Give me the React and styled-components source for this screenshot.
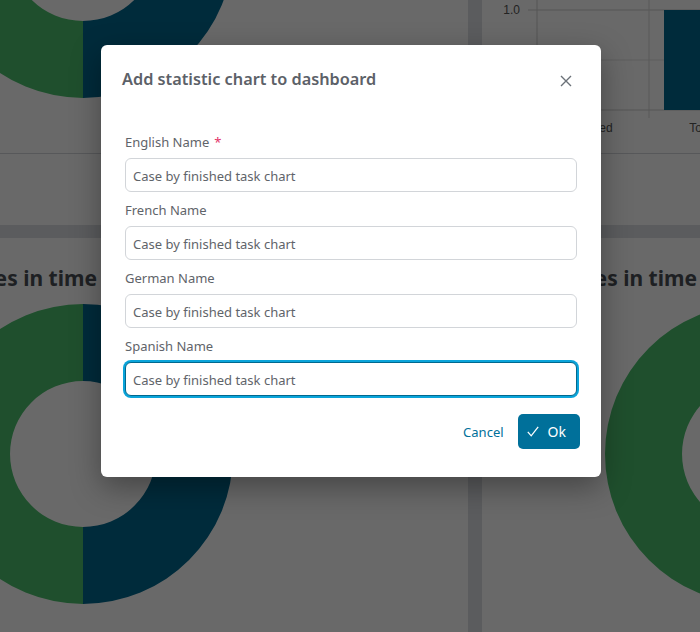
import React from "react";
import styled, { createGlobalStyle } from "styled-components";

const GlobalStyle = createGlobalStyle`
  html, body {
    margin: 0;
    padding: 0;
    height: 632px;
    overflow: hidden;
    background: #dee0e5;
    font-family: "Noto Sans", "Open Sans", sans-serif;
  }
`;

const Page = styled.div`
  position: relative;
  width: 700px;
  height: 632px;
  overflow: hidden;
`;

const Dashboard = styled.div`
  display: grid;
  grid-template-columns: 528px 560px;
  grid-template-rows: 225px 420px;
  column-gap: 14px;
  row-gap: 13px;
  margin-left: -60px;
`;

const Card = styled.div`
  background: #ffffff;
  display: flex;
  flex-direction: column;
  overflow: hidden;
`;

const ChartArea = styled.div`
  height: 153px;
  border-bottom: 1px solid #d4d6da;
  overflow: hidden;
`;

const CardTitle = styled.h2`
  margin: 0;
  padding: 26px 0 0 ${(p) => p.$indent}px;
  font-size: 21px;
  font-weight: 700;
  line-height: 28px;
  color: #4a4f55;
  white-space: nowrap;
`;

const Backdrop = styled.div`
  position: absolute;
  inset: 0;
  background: rgba(0, 0, 0, 0.59);
  display: flex;
  justify-content: center;
  align-items: flex-start;
  padding: 45px 0 0 2px;
`;

const Modal = styled.div`
  width: 500px;
  background: #ffffff;
  border-radius: 6px;
  box-shadow: 0 10px 30px rgba(0, 0, 0, 0.35);
  display: flex;
  flex-direction: column;
`;

const Header = styled.div`
  display: flex;
  align-items: center;
  justify-content: space-between;
  padding: 21px 28px 19px 21px;
`;

const Title = styled.h3`
  margin: 0;
  font-size: 16.3px;
  font-weight: 600;
  line-height: 26px;
  color: #5c6168;
`;

const CloseButton = styled.button`
  border: none;
  background: none;
  padding: 0;
  margin-top: 4px;
  width: 14px;
  height: 14px;
  display: flex;
  align-items: center;
  justify-content: center;
  cursor: pointer;
`;

const Content = styled.div`
  display: flex;
  flex-direction: column;
  gap: 9px;
  padding: 22px 24px 0 24px;
`;

const Field = styled.div`
  display: flex;
  flex-direction: column;
  gap: 7px;
`;

const Label = styled.label`
  font-size: 13px;
  line-height: 18px;
  color: #5f646a;
`;

const Required = styled.span`
  color: #e3326a;
  margin-left: 5px;
`;

const Input = styled.input`
  box-sizing: border-box;
  width: 100%;
  height: 34px;
  padding: 1px 7px 0 7px;
  border-radius: 6px;
  border: 1px solid ${(p) => (p.$focused ? "#00698f" : "#d2d5d9")};
  box-shadow: ${(p) => (p.$focused ? "0 0 0 2px #0aa4da" : "none")};
  font-family: "Noto Sans", "Open Sans", sans-serif;
  font-size: 13px;
  color: #5f646a;
  outline: none;
  background: #ffffff;
`;

const Footer = styled.div`
  display: flex;
  justify-content: flex-end;
  align-items: center;
  gap: 14px;
  padding: 18px 21px 28px 24px;
`;

const TextButton = styled.button`
  border: none;
  background: none;
  padding: 0;
  font-family: "Noto Sans", "Open Sans", sans-serif;
  font-size: 13px;
  color: #00709a;
  cursor: pointer;
`;

const PrimaryButton = styled.button`
  display: flex;
  align-items: center;
  gap: 9px;
  height: 35px;
  padding: 0 14px 0 9px;
  border: none;
  border-radius: 5px;
  background: #00709a;
  color: #ffffff;
  font-family: "Noto Sans", "Open Sans", sans-serif;
  font-size: 14px;
  cursor: pointer;
`;

const GREEN = "#4cc16e";
const NAVY = "#006990";

function Donut({ cx, cy, width, height }) {
  const R = 150;
  const r = 73;
  const left = `M ${cx} ${cy - R} A ${R} ${R} 0 0 0 ${cx} ${cy + R} L ${cx} ${cy + r} A ${r} ${r} 0 0 1 ${cx} ${cy - r} Z`;
  const right = `M ${cx} ${cy - R} A ${R} ${R} 0 0 1 ${cx} ${cy + R} L ${cx} ${cy + r} A ${r} ${r} 0 0 0 ${cx} ${cy - r} Z`;
  return (
    <svg width={width} height={height} style={{ display: "block" }}>
      <path d={left} fill={GREEN} />
      <path d={right} fill={NAVY} />
    </svg>
  );
}

function BarChart() {
  return (
    <svg width="560" height="153" style={{ display: "block" }}>
      <text x="38" y="14" textAnchor="end" fontFamily="Liberation Sans, sans-serif" fontSize="12" fill="#555">
        1.0
      </text>
      <line x1="46" y1="10" x2="560" y2="10" stroke="#cfcfcf" />
      <line x1="55" y1="60" x2="560" y2="60" stroke="#e2e2e2" />
      <line x1="55" y1="0" x2="55" y2="110" stroke="#cfcfcf" />
      <line x1="167" y1="0" x2="167" y2="118" stroke="#d8d8d8" />
      <line x1="55" y1="110" x2="560" y2="110" stroke="#cfcfcf" />
      <rect x="182" y="10" width="80" height="100" fill={NAVY} />
      <text x="108" y="132" textAnchor="middle" fontFamily="Liberation Sans, sans-serif" fontSize="12" fill="#555">
        Finished
      </text>
      <text x="220" y="132" textAnchor="middle" fontFamily="Liberation Sans, sans-serif" fontSize="12" fill="#555">
        Total
      </text>
    </svg>
  );
}

const fields = [
  { id: "en", label: "English Name", required: true },
  { id: "fr", label: "French Name" },
  { id: "de", label: "German Name" },
  { id: "es", label: "Spanish Name", focused: true },
];

export default function App() {
  return (
    <>
      <GlobalStyle />
      <Page>
        <Dashboard>
          <Card>
            <ChartArea>
              <Donut cx={143} cy={-52} width={528} height={153} />
            </ChartArea>
          </Card>
          <Card>
            <ChartArea>
              <BarChart />
            </ChartArea>
          </Card>
          <Card>
            <CardTitle $indent={18}>Cases in time</CardTitle>
            <Donut cx={143} cy={162} width={528} height={380} />
          </Card>
          <Card>
            <CardTitle $indent={76}>Cases in time</CardTitle>
            <Donut cx={273} cy={162} width={560} height={380} />
          </Card>
        </Dashboard>

        <Backdrop>
          <Modal>
            <Header>
              <Title>Add statistic chart to dashboard</Title>
              <CloseButton aria-label="Close">
                <svg width="12" height="12" viewBox="0 0 12 12">
                  <path d="M1 1 L11 11 M11 1 L1 11" stroke="#6b7178" strokeWidth="1.4" fill="none" />
                </svg>
              </CloseButton>
            </Header>
            <Content>
              {fields.map((f) => (
                <Field key={f.id}>
                  <Label htmlFor={f.id}>
                    {f.label}
                    {f.required && <Required>*</Required>}
                  </Label>
                  <Input id={f.id} defaultValue="Case by finished task chart" $focused={f.focused} />
                </Field>
              ))}
            </Content>
            <Footer>
              <TextButton>Cancel</TextButton>
              <PrimaryButton>
                <svg width="12" height="11" viewBox="0 0 12 11">
                  <path d="M0.8 5.8 L4.2 9.8 L11.2 0.8" stroke="#fff" strokeWidth="1.3" fill="none" />
                </svg>
                Ok
              </PrimaryButton>
            </Footer>
          </Modal>
        </Backdrop>
      </Page>
    </>
  );
}
